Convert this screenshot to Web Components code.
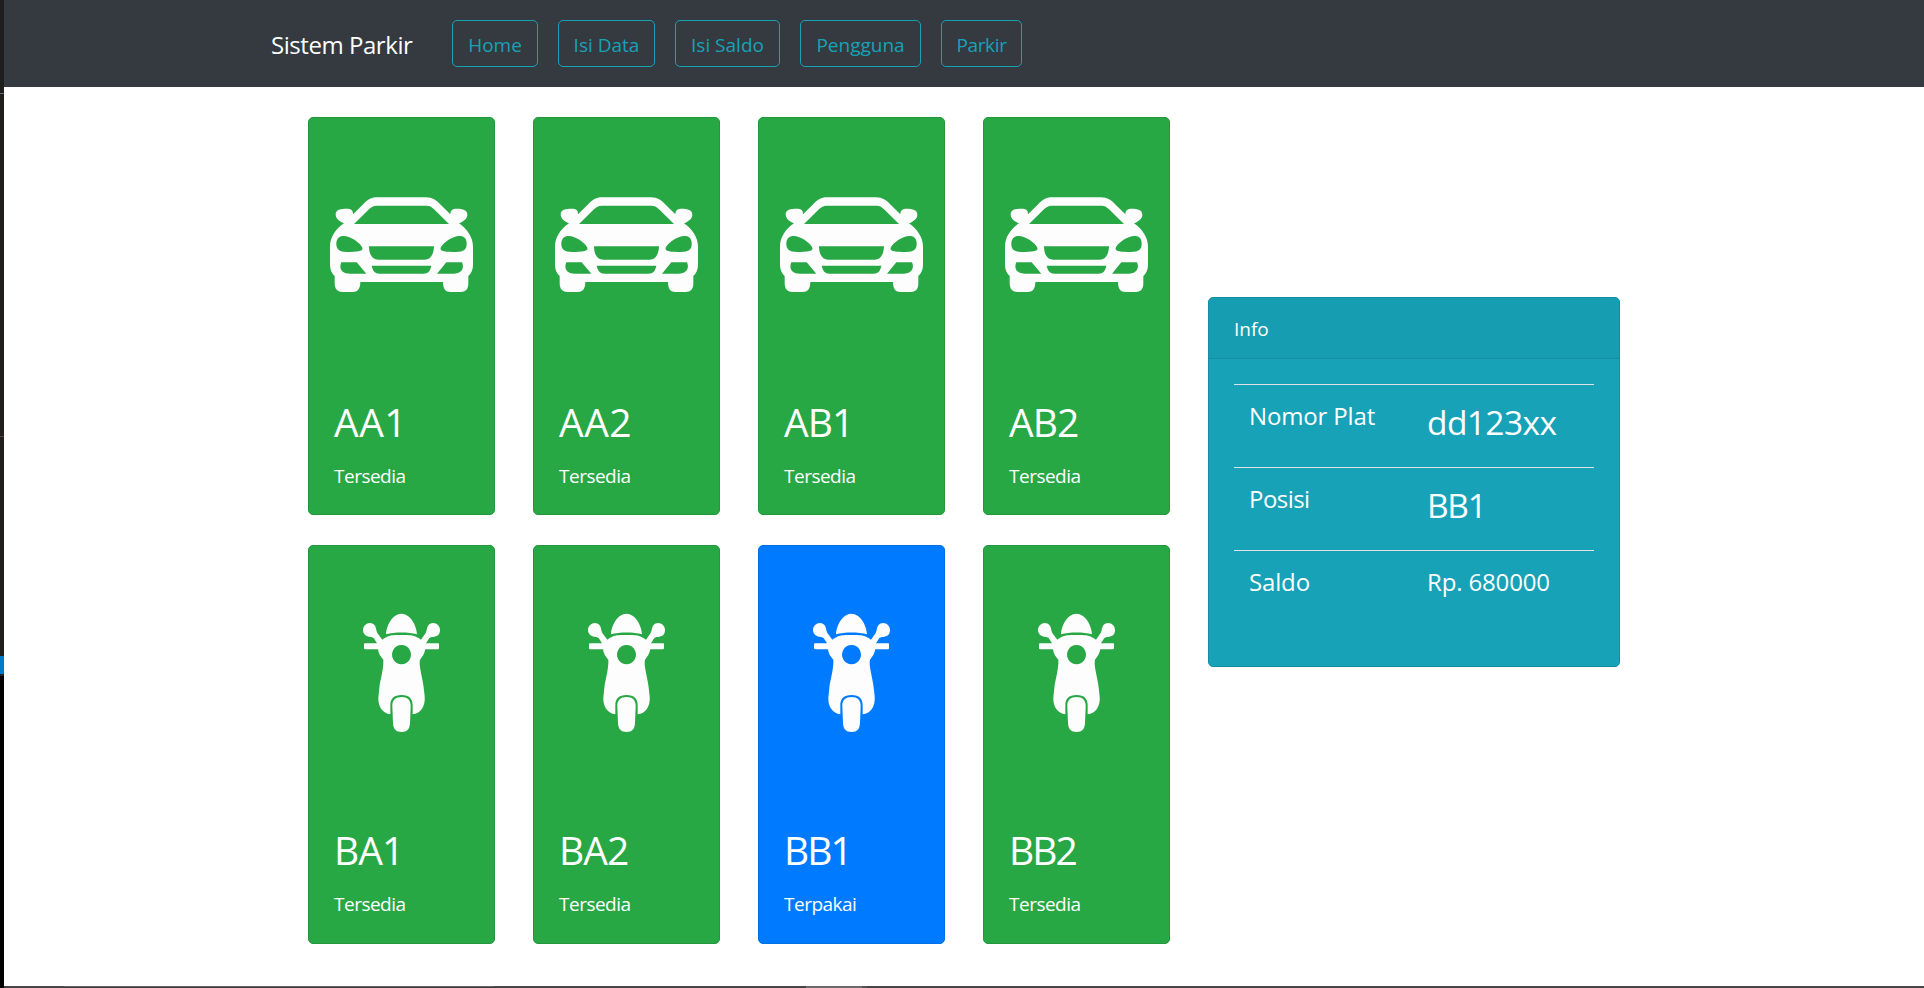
<!DOCTYPE html>
<html lang="id">
<head>
<meta charset="utf-8">
<title>Sistem Parkir</title>
<style>
html,body{margin:0;height:100%;overflow:hidden}
body{background:#fff;font-family:"Open Sans","Noto Sans",sans-serif;font-size:19px;line-height:30px;color:#fff}
</style>
</head>
<body>
<parking-app></parking-app>
<script>
const define = (name, html, setup) => customElements.define(name, class extends HTMLElement {
  connectedCallback() {
    if (this.shadowRoot) return;
    const root = this.attachShadow({mode: 'open'});
    const t = document.createElement('template');
    t.innerHTML = html;
    root.append(t.content.cloneNode(true));
    if (setup) setup(this, root);
  }
});

const CAR = `<path fill-rule="evenodd" d="M132 340C116 334 107 325 107 313C107 299 122 296 140 296C154 296 159 301 159 313L188 284C204 269 212 262 232 262H378C398 262 408 271 422 284L451 313C451 301 458 296 470 296C488 296 502 300 502 314C502 326 491 334 477 340C502 358 519 382 519 410V465C519 480 513 491 505 498V520C505 539 496 546 482 546H452C437 546 429 537 429 516H181C181 537 172 546 158 546H128C113 546 104 538 104 519V498C96 491 90 480 90 465V410C90 382 106 358 132 340ZM162 342H447L402 298C394 290 389 287 380 287H230C220 287 215 291 207 298ZM128 378C150 376 180 398 187 413C190 424 176 426 140 426C118 426 109 418 109 402C109 388 116 379 128 378ZM482 378C458 376 430 398 422 413C419 424 434 426 468 426C492 426 500 418 500 402C500 388 494 379 482 378ZM207 409H402C401 432 393 449 374 449H235C216 449 207 432 207 409ZM215 467H394C391 482 385 491 370 491H239C225 491 218 482 215 467ZM124 457H170L199 491H150C125 491 116 475 124 457ZM439 457H486C494 475 484 491 461 491H411Z"/>`;

const BIKE = `<path d="M168 133C169 106 188 71 214 71C241 71 260 106 261 133C236 126 193 126 168 133Z"/>
<path fill-rule="evenodd" d="M157 149C177 133 195 135 214 135C235 135 252 133 273 149L287 129C291 122 290 112 295 106C307 92 330 101 330 120C330 135 320 141 305 141L298 144L288 160H325Q327 160 327 163V175Q327 178 324 178H286C284 191 276 202 270 209C266 225 275 252 280 285L284 318C287 350 271 371 248 373V346C248 327 238 315 215 315C191 315 181 327 181 346V373C158 369 144 351 145 323L149 284C155 256 161 230 160 209C153 202 145 191 144 178H106Q102 178 102 175V163Q102 160 105 160H141L131 144L124 141C109 141 99 132 99 120C99 101 122 91 134 106C139 112 138 122 142 129ZM214 165A28.500 29 0 1 0 215 165Z"/>
<path d="M215 321C232 321 243 330 242 350L240 399C239 418 231 426 215 426C198 426 190 418 189 399L187 350C186 330 197 321 215 321Z"/>`;

define('nav-button', `<style>
:host{display:block;box-sizing:border-box;height:47px;border:1px solid #17a2b8;border-radius:5px;color:#17a2b8;text-align:center;line-height:30px;padding-top:9px;white-space:nowrap}
</style><slot></slot>`);

define('nav-bar', `<style>
:host{display:flex;height:87px;box-sizing:border-box;background:#343a40;padding:20px 0 0 266px}
.brand{width:182px;padding-left:1px;box-sizing:border-box;font-size:24px;line-height:50px;white-space:nowrap;letter-spacing:-.45px}
nav{display:flex;gap:20px}
</style><div class="brand">Sistem Parkir</div><nav>
<nav-button style="width:86px">Home</nav-button>
<nav-button style="width:97px">Isi Data</nav-button>
<nav-button style="width:105px">Isi Saldo</nav-button>
<nav-button style="width:121px">Pengguna</nav-button>
<nav-button style="width:81px;letter-spacing:-.35px">Parkir</nav-button></nav>`);

define('parking-slot', `<style>
:host{display:block;box-sizing:border-box;background:#28a745;border:1px solid #24963e;border-radius:5px}
:host([used]){background:#007bff;border-color:#006fe6}
svg{display:block;width:185px;height:270px;fill:#fdfdfd}
.text{padding:10px 25px 0}
h1{font-size:39px;line-height:48px;font-weight:400;margin:0 0 15px;letter-spacing:var(--track,0)}
p{margin:0;letter-spacing:-.5px}
</style><svg></svg><div class="text"><h1><slot></slot></h1><p></p></div>`, (el, root) => {
  const bike = el.getAttribute('kind') === 'bike';
  const svg = root.querySelector('svg');
  svg.setAttribute('viewBox', bike ? '-63 -132 555 810' : '27 24 555 810');
  svg.innerHTML = bike ? BIKE : CAR;
  root.querySelector('p').textContent = el.hasAttribute('used') ? 'Terpakai' : 'Tersedia';
});

define('info-row', `<style>
:host{display:grid;grid-template-columns:178px 1fr;box-sizing:border-box;height:83px;border-top:1px solid #dee2e6;padding:16px 0 0 15px;white-space:nowrap}
.label{font-size:24px;line-height:30px;letter-spacing:var(--label-track,-.15px)}
.value{font-size:33.500px;line-height:42px;letter-spacing:var(--value-track,-.6px)}
:host([small]) .value{font-size:24px;line-height:30px}
</style><div class="label"><slot name="label"></slot></div><div class="value"><slot></slot></div>`);

define('info-card', `<style>
:host{display:block;box-sizing:border-box;width:412px;height:370px;background:#17a2b8;border:1px solid #148ea1;border-radius:5px;overflow:hidden}
header{box-sizing:border-box;height:61px;border-bottom:1px solid #148ea1;background:#179db2;padding:16px 25px 0}
.body{padding:25px 25px 0}
</style><header>Info</header><div class="body">
<info-row><span slot="label">Nomor Plat</span>dd123xx</info-row>
<info-row style="--label-track:-.55px;--value-track:-1.3px"><span slot="label">Posisi</span>BB1</info-row>
<info-row small style="--value-track:-.15px"><span slot="label">Saldo</span>Rp. 680000</info-row></div>`);

define('window-edge', `<style>
:host{display:flex;flex-direction:column;width:4px;height:988px;background:#000}
div{flex:none}
</style><div style="height:93px;background:#1e1e1e"></div><div style="height:1px;background:#6b6b6b"></div>
<div style="height:342px;background:#201f1d"></div><div style="height:1px;background:#4a4948"></div>
<div style="height:219px;background:#201f1b"></div><div style="height:18px;background:#007acc"></div><div style="height:2px;background:#20262b"></div>`);

define('task-strip', `<style>
:host{display:flex;height:2px;background:#484546}
.a{margin-left:60px;width:430px;box-sizing:border-box;height:2px;border-top:1px solid #686667;background:#3b393a}
.b{margin-left:312px;width:56px;background:#6c6a6b}.c{width:5px;background:#555253}
</style><div class="a"></div><div class="b"></div><div class="c"></div>`);

define('parking-app', `<style>
:host{display:grid;grid-template-columns:4px 1920px;height:988px}
.page{display:grid;grid-template-rows:87px 899px 2px}
main{display:flex;padding:30px 0 0 304px;gap:38px;align-items:flex-start;box-sizing:border-box}
.slots{display:grid;grid-template-columns:repeat(4,187px);grid-template-rows:398px 399px;gap:30px 38px}
.aa{--track:.5px}.ab{--track:-.9px}.bb{--track:-2px}
info-card{margin-top:180px}
</style><window-edge></window-edge><div class="page"><nav-bar></nav-bar><main><div class="slots">
<parking-slot class="aa">AA1</parking-slot><parking-slot class="aa">AA2</parking-slot><parking-slot class="ab">AB1</parking-slot><parking-slot class="ab">AB2</parking-slot>
<parking-slot class="ab" kind="bike">BA1</parking-slot><parking-slot class="ab" kind="bike">BA2</parking-slot><parking-slot class="bb" kind="bike" used>BB1</parking-slot><parking-slot class="bb" kind="bike">BB2</parking-slot>
</div><info-card></info-card></main><task-strip></task-strip></div>`);
</script>
</body>
</html>
